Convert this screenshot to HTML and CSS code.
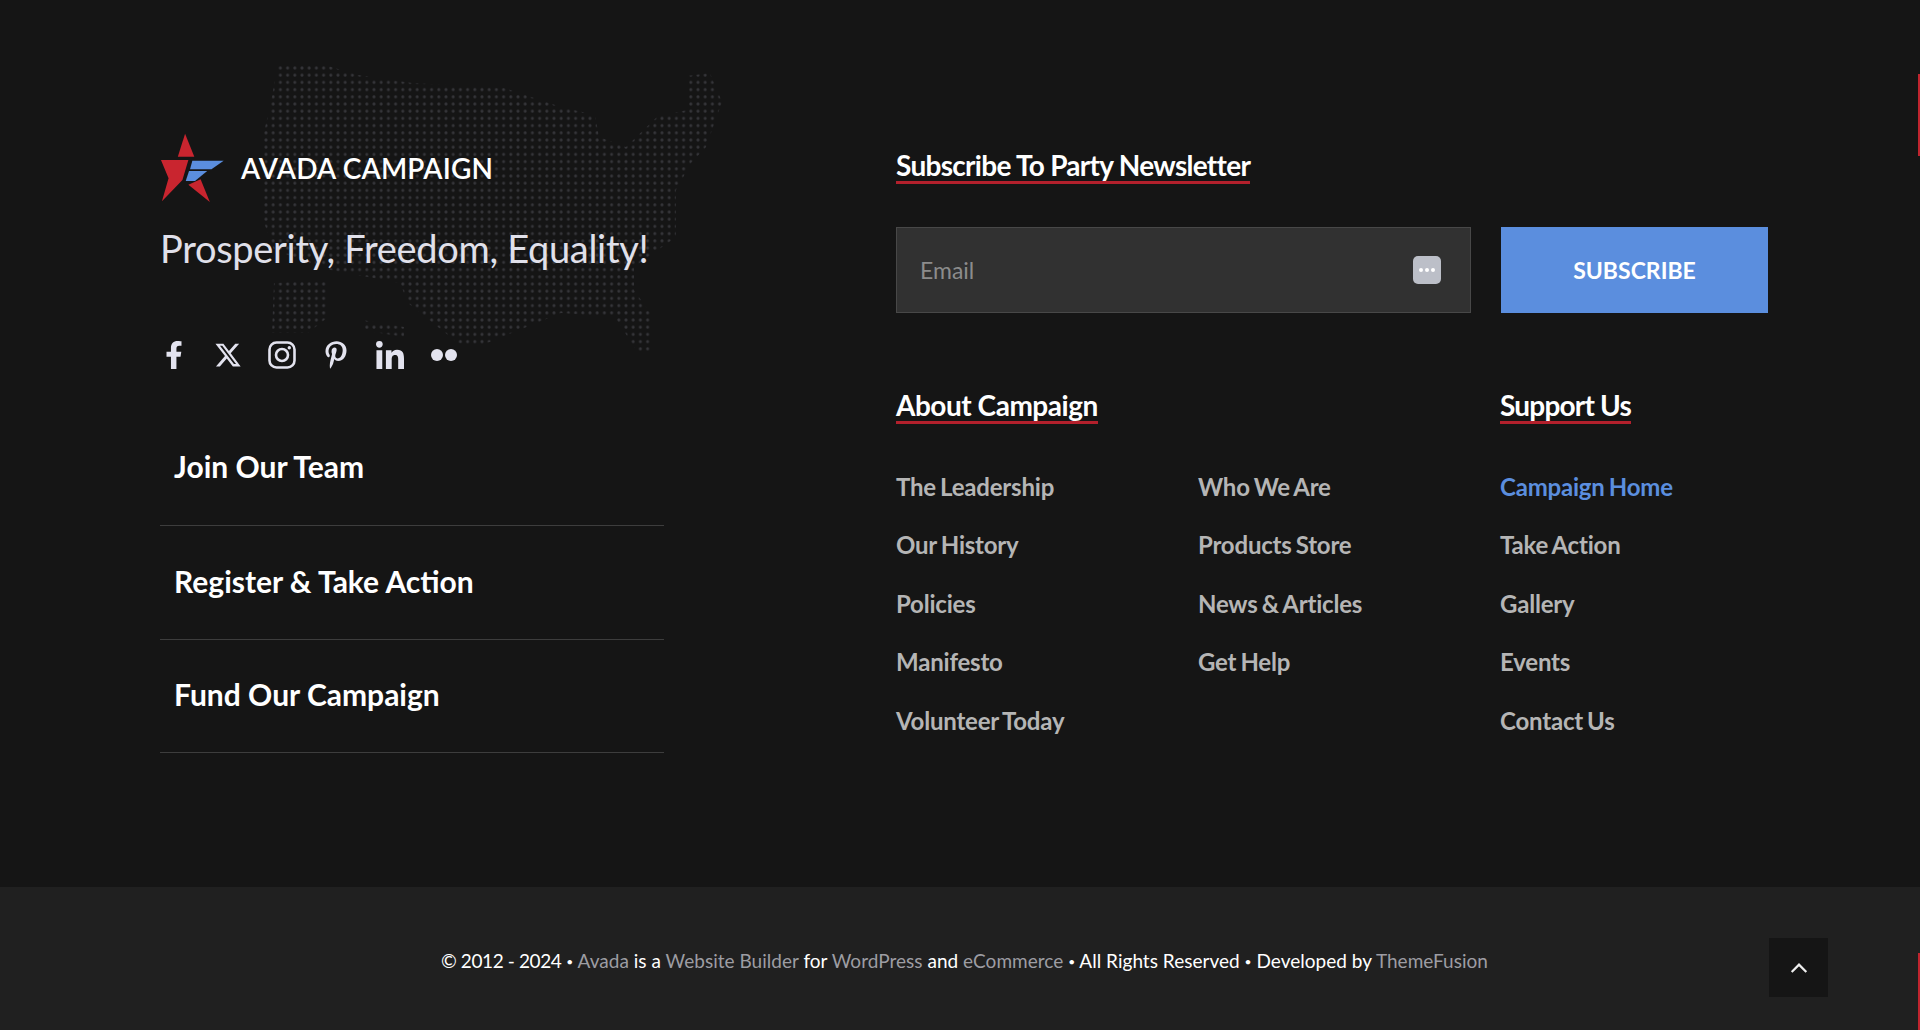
FILE: index.html
```html
<!DOCTYPE html>
<html lang="en">
<head>
<meta charset="utf-8">
<title>Avada Campaign</title>
<link rel="stylesheet" href="styles.css">
</head>
<body>
<footer class="footer">
  <svg class="map" viewBox="0 0 600 340" aria-hidden="true">
    <defs>
      <pattern id="dots" width="7.2" height="7.2" patternUnits="userSpaceOnUse"><circle cx="3.6" cy="3.6" r="1.5" fill="#353539"/></pattern>
    </defs>
    <path fill="url(#dots)" d="M138 14L188 16 218 25 272 33 364 38 421 57 455 65 459 87 486 97 517 67 547 60 547 26 570 23 582 52 566 97 551 113 536 140 536 187 494 217 494 240 513 267 513 303 498 303 475 267 421 263 337 297 318 293 268 253 260 233 191 220 134 200 122 167 122 90 130 57Z"/>
    <path fill="url(#dots)" d="M134 233L188 230 188 267 168 283 132 283Z"/>
    <path fill="url(#dots)" d="M222 270L264 277 264 287 222 280Z"/>
  </svg>
  <div class="main">
    <section class="left">
      <div class="brand">
        <svg class="star" viewBox="30 38 195 212" aria-hidden="true">
          <path fill="#c9252f" d="M105 40L133 110H83Z"/>
          <path fill="#c9252f" d="M32 120H115L97 180 35 245 55 175Z"/>
          <path fill="#c9252f" d="M115 195L152 178 180 247Z"/>
          <path fill="#5b8ede" d="M127 122H222L185 148H120Z"/>
          <path fill="#5b8ede" d="M117 153H172L135 183H107Z"/>
        </svg>
        <span class="brand-name">AVADA CAMPAIGN</span>
      </div>
      <p class="tagline">Prosperity, Freedom, Equality!</p>
      <div class="social">
        <span class="social-item"><svg class="icon" viewBox="0 0 320 512"><path d="M279.14 288l14.22-92.66h-88.91v-60.13c0-25.35 12.42-50.06 52.24-50.06h40.42V6.26S260.43 0 225.36 0c-73.22 0-121.08 44.38-121.08 124.72v70.62H22.89V288h81.39v224h100.17V288z"/></svg></span>
        <span class="social-item"><svg class="icon" viewBox="0 0 512 512"><path d="M389.2 48h70.6L305.6 224.2 487 464H345L233.7 318.6 106.5 464H35.8L200.7 275.5 26.8 48H172.4L272.9 180.9 389.2 48zM364.4 421.8h39.1L151.1 88h-42L364.4 421.8z"/></svg></span>
        <span class="social-item"><svg class="icon" viewBox="0 0 28 28"><rect class="ln" x="1.5" y="1.5" width="25" height="25" rx="7"/><circle class="ln" cx="14" cy="14" r="6"/><circle cx="21.3" cy="6.7" r="1.7"/></svg></span>
        <span class="social-item"><svg class="icon" viewBox="0 0 384 512"><path d="M204 6.5C101.4 6.5 0 74.9 0 185.6 0 256 39.6 296 63.6 296c9.9 0 15.6-27.6 15.6-35.4 0-9.3-23.7-29.1-23.7-67.8 0-80.4 61.2-137.4 140.4-137.4 68.1 0 118.5 38.7 118.5 109.8 0 53.1-21.3 152.7-90.3 152.7-24.9 0-46.2-18-46.2-43.8 0-37.8 26.4-74.4 26.4-113.4 0-66.2-93.9-54.2-93.9 25.8 0 16.8 2.1 35.4 9.6 50.7-13.8 59.4-42 147.9-42 209.1 0 18.9 2.7 37.5 4.5 56.4 3.4 3.8 1.7 3.4 6.9 1.5 50.4-69 48.6-82.5 71.4-172.8 12.3 23.4 44.1 36 69.3 36 106.2 0 153.9-103.5 153.9-196.8C384 71.3 298.2 6.5 204 6.5z"/></svg></span>
        <span class="social-item"><svg class="icon" viewBox="0 0 448 448"><path d="M100.28 448H7.4V148.9h92.88zM53.79 108.1C24.09 108.1 0 83.5 0 53.8a53.79 53.79 0 0 1 107.58 0c0 29.7-24.1 54.3-53.79 54.3zM447.9 448h-92.68V302.4c0-34.7-.7-79.2-48.29-79.2-48.29 0-55.69 37.7-55.69 76.7V448h-92.78V148.9h89.08v40.8h1.3c12.4-23.5 42.69-48.3 87.88-48.3 94 0 111.28 61.9 111.28 142.3V448z"/></svg></span>
        <span class="social-item"><svg class="icon" viewBox="0 0 28 28"><circle cx="7" cy="14" r="6"/><circle cx="21" cy="14" r="6"/></svg></span>
      </div>
      <nav class="cta">
        <a class="cta-link">Join Our Team</a>
        <a class="cta-link">Register &amp; Take Action</a>
        <a class="cta-link">Fund Our Campaign</a>
      </nav>
    </section>
    <section class="right">
      <h3 class="heading"><span class="heading-text head-sub">Subscribe To Party Newsletter</span></h3>
      <form class="subscribe">
        <div class="email">
          <span class="placeholder">Email</span>
          <span class="keyicon"><i></i><i></i><i></i></span>
        </div>
        <div class="button">SUBSCRIBE</div>
      </form>
      <div class="menus">
        <div class="menu-about">
          <h3 class="heading"><span class="heading-text head-about">About Campaign</span></h3>
          <div class="two-cols">
            <ul class="links">
              <li>The Leadership</li><li>Our History</li><li>Policies</li><li>Manifesto</li><li>Volunteer Today</li>
            </ul>
            <ul class="links">
              <li>Who We Are</li><li>Products Store</li><li>News &amp; Articles</li><li>Get Help</li>
            </ul>
          </div>
        </div>
        <div class="menu-support">
          <h3 class="heading"><span class="heading-text head-support">Support Us</span></h3>
          <ul class="links">
            <li class="active">Campaign Home</li><li>Take Action</li><li>Gallery</li><li>Events</li><li>Contact Us</li>
          </ul>
        </div>
      </div>
    </section>
  </div>
  <div class="bar">
    <p class="copyright"><span class="year">© 2012 - 2024</span> <span class="sep">•</span> <a>Avada</a> is a <a>Website Builder</a> for <a>WordPress</a> and <a>eCommerce</a> <span class="sep">•</span> All Rights Reserved <span class="sep">•</span> Developed by <a>ThemeFusion</a></p>
    <div class="totop"><svg viewBox="0 0 16 10" class="chev"><path d="M1.5 8.5L8 2l6.5 6.5"/></svg></div>
  </div>
  <span class="edge edge-top"></span>
  <span class="edge edge-bottom"></span>
</footer>
</body>
</html>
```

FILE: styles.css
```css
* { box-sizing: border-box; }
html, body { margin: 0; height: 1030px; overflow: hidden; }
body { background: #151515; color: #fff; font-family: Lato, "Open Sans", sans-serif; }
.footer { position: relative; height: 1030px; display: flex; flex-direction: column; }
.map { position: absolute; left: 140px; top: 50px; width: 600px; height: 340px; }
.main { position: relative; height: 887px; padding: 133px 152px 0 160px; display: flex; gap: 232px; }
.left { width: 504px; }
.brand { display: flex; align-items: center; gap: 16px; height: 70px; }
.star { width: 65px; height: 70px; flex: none; }
.brand-name { font-size: 28px; font-weight: 600; letter-spacing: 0.2px; color: #fff; }
.tagline { margin: 22px 0 0; font-size: 38px; line-height: 46px; font-weight: 400; color: #e0e0ea; letter-spacing: -0.3px; white-space: nowrap; }
.social { display: flex; margin: 69px 0 0 -13px; height: 30px; align-items: center; }
.social-item { width: 54px; height: 30px; display: flex; align-items: center; justify-content: center; }
.icon { height: 28px; width: 28px; fill: #e3e3ef; }
.ln { fill: none; stroke: #e3e3ef; stroke-width: 2.6; }
.cta { display: flex; flex-direction: column; margin-top: 42px; }
.cta-link { height: 114px; display: flex; align-items: center; padding: 0 0 3px 14px; font-size: 30px; font-weight: 700; color: #fff; border-bottom: 1px solid #3d3d3d; }
.cta-link:first-child { padding-bottom: 5px; }
.cta-link:nth-child(n+2) { height: 113.5px; }
.right { width: 872px; padding-top: 16px; }
.heading { margin: 0; font-size: 28px; line-height: 32px; font-weight: 700; color: #fff; }
.heading-text { display: inline-block; border-bottom: 3px solid #b3202c; }
.head-sub { letter-spacing: -0.7px; }
.head-about { letter-spacing: -0.47px; }
.head-support { letter-spacing: -0.8px; }
.subscribe { display: flex; gap: 30px; margin-top: 43px; height: 86px; }
.email { width: 575px; background: #313131; border: 1px solid #484848; display: flex; align-items: center; justify-content: space-between; padding: 0 29px 0 23px; }
.placeholder { font-size: 23px; color: #8c8c8c; }
.keyicon { width: 28px; height: 28px; border-radius: 5px; background: #bcbfc8; display: flex; align-items: center; justify-content: center; gap: 2px; }
.keyicon i { width: 4px; height: 4px; background: #fff; border-radius: 50%; }
.button { width: 267px; background: #5b8ede; display: flex; align-items: center; justify-content: center; font-size: 23px; font-weight: 700; color: #fff; }
.menus { display: flex; margin-top: 76px; }
.menu-about { width: 604px; }
.two-cols { display: flex; }
.two-cols .links { width: 302px; }
.links { list-style: none; margin: 49px 0 0; padding: 0; font-size: 24px; font-weight: 700; color: #b5b5b5; letter-spacing: -0.2px; word-spacing: -1.5px; }
.links li { height: 58.4px; line-height: 28px; }
.links .active { color: #5b8ede; }
.bar { flex: 1; position: relative; background: #202020; display: flex; justify-content: center; padding: 60px 0 0 9px; }
.copyright { margin: 0; font-size: 19px; line-height: 28px; color: #fff; letter-spacing: 0.02px; }
.copyright a { color: #9d9da3; }
.year { letter-spacing: -0.4px; }
.sep { font-size: 12px; vertical-align: 2px; }
.totop { position: absolute; left: 1769px; top: 51px; width: 59px; height: 59px; background: #151515; display: flex; align-items: center; justify-content: center; }
.chev { width: 18px; height: 12px; fill: none; stroke: #eee; stroke-width: 2; }
.edge { position: absolute; right: 0; width: 2px; background: #c0242e; }
.edge-top { top: 74px; height: 82px; }
.edge-bottom { top: 953px; height: 77px; }
```
